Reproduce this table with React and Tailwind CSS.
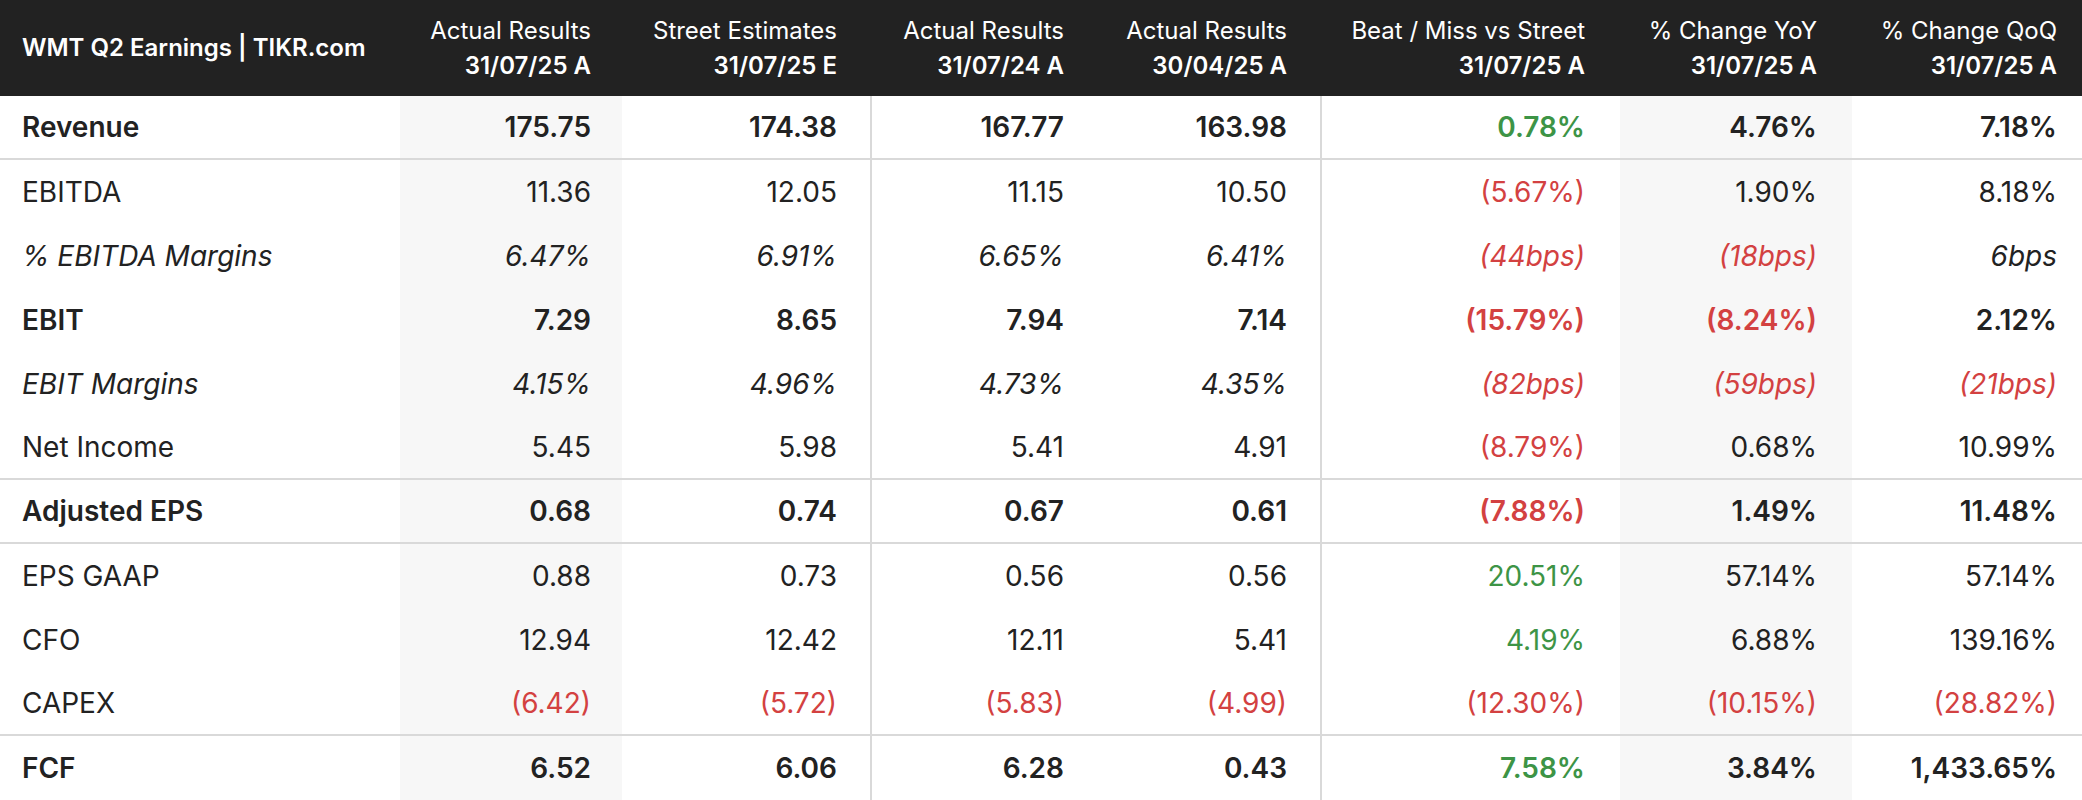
import React from "react";

const cols = "grid grid-cols-[400px_222px_248px_228px_222px_300px_232px_230px]";

const headers = [
  ["Actual Results", "31/07/25 A"],
  ["Street Estimates", "31/07/25 E"],
  ["Actual Results", "31/07/24 A"],
  ["Actual Results", "30/04/25 A"],
  ["Beat / Miss vs Street", "31/07/25 A"],
  ["% Change YoY", "31/07/25 A"],
  ["% Change QoQ", "31/07/25 A"],
];

// g = green, r = red, anything else = default
const rows = [
  { label: "Revenue", style: "bold", line: true, vals: ["175.75", "174.38", "167.77", "163.98", "0.78%", "4.76%", "7.18%"], tone: [0, 0, 0, 0, "g", 0, 0] },
  { label: "EBITDA", vals: ["11.36", "12.05", "11.15", "10.50", "(5.67%)", "1.90%", "8.18%"], tone: [0, 0, 0, 0, "r", 0, 0] },
  { label: "% EBITDA Margins", style: "italic", vals: ["6.47%", "6.91%", "6.65%", "6.41%", "(44bps)", "(18bps)", "6bps"], tone: [0, 0, 0, 0, "r", "r", 0] },
  { label: "EBIT", style: "bold", vals: ["7.29", "8.65", "7.94", "7.14", "(15.79%)", "(8.24%)", "2.12%"], tone: [0, 0, 0, 0, "r", "r", 0] },
  { label: "EBIT Margins", style: "italic", vals: ["4.15%", "4.96%", "4.73%", "4.35%", "(82bps)", "(59bps)", "(21bps)"], tone: [0, 0, 0, 0, "r", "r", "r"] },
  { label: "Net Income", line: true, vals: ["5.45", "5.98", "5.41", "4.91", "(8.79%)", "0.68%", "10.99%"], tone: [0, 0, 0, 0, "r", 0, 0] },
  { label: "Adjusted EPS", style: "bold", line: true, vals: ["0.68", "0.74", "0.67", "0.61", "(7.88%)", "1.49%", "11.48%"], tone: [0, 0, 0, 0, "r", 0, 0] },
  { label: "EPS GAAP", vals: ["0.88", "0.73", "0.56", "0.56", "20.51%", "57.14%", "57.14%"], tone: [0, 0, 0, 0, "g", 0, 0] },
  { label: "CFO", vals: ["12.94", "12.42", "12.11", "5.41", "4.19%", "6.88%", "139.16%"], tone: [0, 0, 0, 0, "g", 0, 0] },
  { label: "CAPEX", line: true, vals: ["(6.42)", "(5.72)", "(5.83)", "(4.99)", "(12.30%)", "(10.15%)", "(28.82%)"], tone: ["r", "r", "r", "r", "r", "r", "r"] },
  { label: "FCF", style: "bold", vals: ["6.52", "6.06", "6.28", "0.43", "7.58%", "3.84%", "1,433.65%"], tone: [0, 0, 0, 0, "g", 0, 0] },
];

const cellPad = ["pr-[31px]", "pr-[33px]", "pr-[34px]", "pr-[33px]", "pr-[35px]", "pr-[35px]", "pr-[25px]"];
const cellBg = ["bg-[#f7f7f7]", "", "border-l-2 border-[#d9d9d9]", "", "border-l-2 border-[#d9d9d9]", "bg-[#f7f7f7]", ""];

function toneClass(t) {
  if (t === "g") return "text-[#3d9446]";
  if (t === "r") return "text-[#d34141]";
  return "text-[#222222]";
}

export default function App() {
  return (
    <div className="w-[2082px] h-[800px] bg-white font-['Inter','Liberation_Sans',sans-serif] text-[#222222] overflow-hidden">
      <div className={`${cols} h-[96px] bg-[#222222] text-white`}>
        <div className="flex items-center pl-[22px] pb-[1px] text-[24px] font-semibold">
          WMT Q2 Earnings | TIKR.com
        </div>
        {headers.map((h, i) => (
          <div key={i} className={`flex flex-col justify-center items-end text-[24px] leading-[35px] pb-[1px] ${cellPad[i]}`}>
            <span className="font-normal">{h[0]}</span>
            <span className="font-semibold">{h[1]}</span>
          </div>
        ))}
      </div>
      {rows.map((r, ri) => {
        const weight = r.style === "bold" ? "font-semibold" : "font-normal";
        const ital = r.style === "italic" ? "italic" : "";
        return (
          <div key={ri} className={`${cols} h-[64px] text-[28px] ${r.line ? "border-b-2 border-[#d9d9d9]" : ""}`}>
            <div className={`flex items-center pl-[22px] ${weight} ${ital}`}>{r.label}</div>
            {r.vals.map((v, i) => (
              <div key={i} className={`flex items-center justify-end ${cellPad[i]} ${cellBg[i]} ${weight} ${ital} ${toneClass(r.tone[i])}`}>
                {v}
              </div>
            ))}
          </div>
        );
      })}
    </div>
  );
}
